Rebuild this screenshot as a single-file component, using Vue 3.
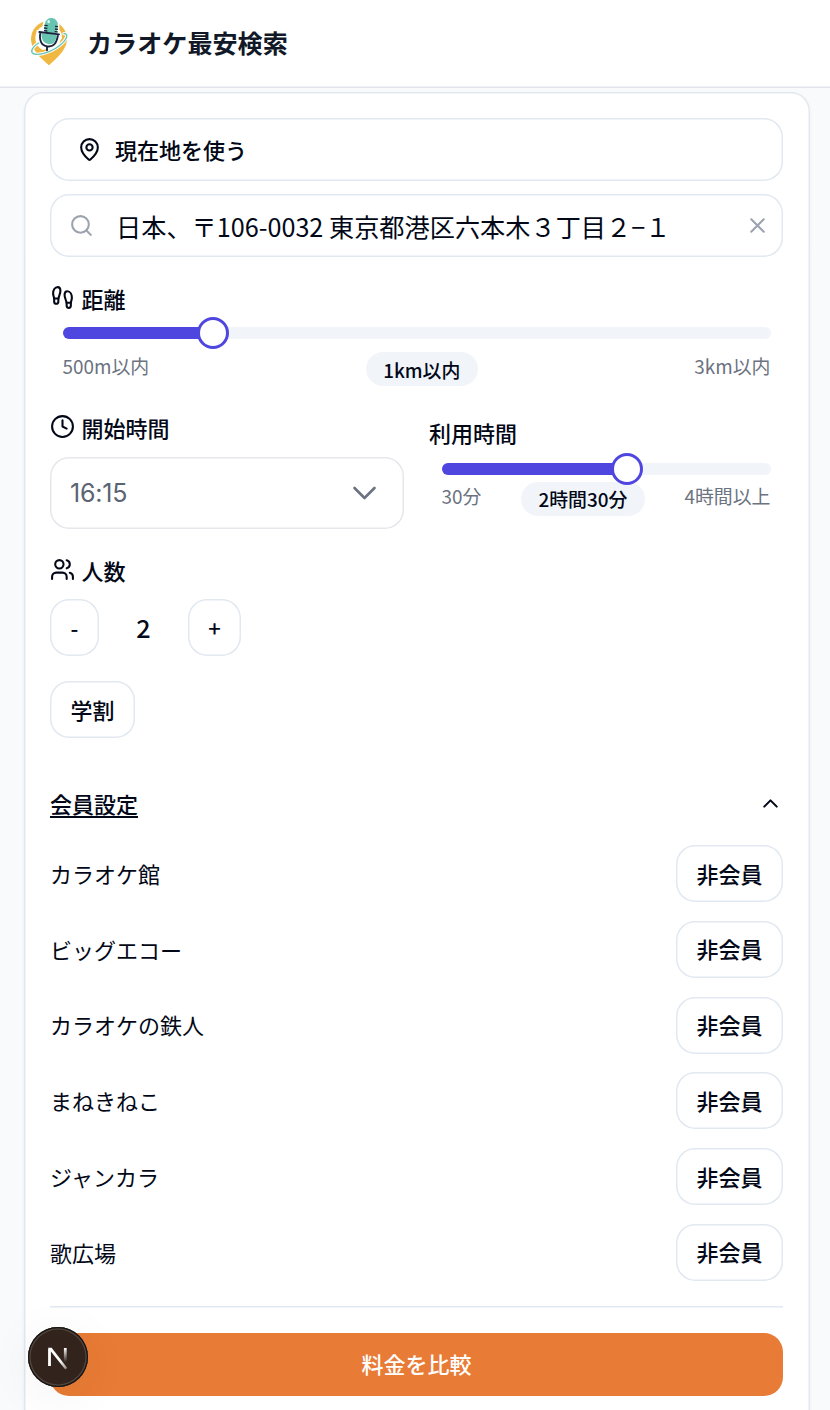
<script setup>
import { ref } from 'vue'

const address = ref('日本、〒106-0032 東京都港区六本木３丁目２−１')
const startTime = ref('16:15')
const people = ref(2)
const memberOpen = ref(true)

// スライダーの位置（%）
const distancePos = ref(21.3)
const durationPos = ref(56.5)

const shops = ref([
  { name: 'カラオケ館', member: false },
  { name: 'ビッグエコー', member: false },
  { name: 'カラオケの鉄人', member: false },
  { name: 'まねきねこ', member: false },
  { name: 'ジャンカラ', member: false },
  { name: '歌広場', member: false }
])

function changePeople(diff) {
  people.value = Math.max(1, people.value + diff)
}
</script>

<template>
  <div class="page">
    <header class="header">
      <svg class="logo" viewBox="84 48 126 153" fill="none">
        <path d="M147 196C136 184 93 154 93 117a54 54 0 0 1 108 0C201 154 158 184 147 196Z" fill="#f0b840" />
        <circle cx="146" cy="114" r="40" fill="#fff" />
        <path d="M128 98V74a25 25 0 0 1 50 0v28Z" fill="#fff" />
        <path d="M108 150Q150 158 190 112L197 125Q191 143 172 166L147 195L114 165Z" fill="#f0b840" />
        <path d="M110 90L184 98Q184 147 147 150Q106 146 110 90Z" fill="#fff" />
        <path d="M192 101C208 101 200 121 177 138C148 160 104 170 96 157C92 150 102 137 116 129" stroke="#fff" stroke-width="10" stroke-linecap="round" />
        <path d="M192 101C208 101 200 121 177 138C148 160 104 170 96 157C92 150 102 137 116 129" stroke="#67c4b1" stroke-width="4" stroke-linecap="round" />
        <rect x="134" y="54" width="39" height="50" rx="19" transform="rotate(6 153 78)" fill="#67c4b1" />
        <path d="M133 76l10 1M132 84l10 1M132 92l10 1M165 79l9 1M165 87l9 1M164 95l9 1" stroke="#18233a" stroke-width="4" />
        <ellipse cx="146" cy="65" rx="4" ry="5" fill="#d8f5ee" />
        <path d="M124 100L170 105Q168 134 146 133Q124 130 124 100Z" fill="#67c4b1" />
        <path d="M118 96L177 103M121 97C117 121 124 137 142 139C162 142 171 127 174 104M141 140v11" stroke="#18233a" stroke-width="5.6" stroke-linecap="round" />
      </svg>
      <h1 class="title">カラオケ最安検索</h1>
    </header>

    <main class="card">
      <!-- 場所 -->
      <button class="box locate">
        <svg class="icon" viewBox="0 0 24 24">
          <path d="M20 10c0 4.993-5.539 10.193-7.399 11.799a1 1 0 0 1-1.202 0C9.539 20.193 4 14.993 4 10a8 8 0 0 1 16 0" />
          <circle cx="12" cy="10" r="3" />
        </svg>
        <span>現在地を使う</span>
      </button>
      <div class="box search">
        <svg class="icon muted" viewBox="0 0 24 24">
          <circle cx="11" cy="11" r="8" />
          <path d="m21 21-4.3-4.3" />
        </svg>
        <span class="address">{{ address }}</span>
        <svg class="icon muted" viewBox="0 0 24 24">
          <path d="M18 6 6 18M6 6l12 12" />
        </svg>
      </div>

      <!-- 距離 -->
      <section class="distance">
        <div class="label">
          <svg class="icon" viewBox="0 0 24 24">
            <path d="M4 16v-2.38C4 11.5 2.97 10.5 3 8c.03-2.72 1.49-6 4.5-6C9.37 2 10 3.8 10 5.5c0 3.11-2 5.66-2 8.68V16a2 2 0 1 1-4 0Z" />
            <path d="M20 20v-2.38c0-2.12 1.03-3.12 1-5.62-.03-2.72-1.49-6-4.5-6C14.63 6 14 7.8 14 9.5c0 3.11 2 5.66 2 8.68V20a2 2 0 1 0 4 0Z" />
            <path d="M16 17h4M4 13h4" />
          </svg>
          <span>距離</span>
        </div>
        <div class="slider">
          <div class="fill" :style="{ width: distancePos + '%' }"></div>
          <div class="knob" :style="{ left: distancePos + '%' }"></div>
        </div>
        <div class="scale">
          <span>500m以内</span>
          <span class="pill">1km以内</span>
          <span>3km以内</span>
        </div>
      </section>

      <!-- 時間 -->
      <div class="times">
        <section class="start">
          <div class="label">
            <svg class="icon" viewBox="0 0 24 24">
              <circle cx="12" cy="12" r="10" />
              <path d="M12 6v6l4 2" />
            </svg>
            <span>開始時間</span>
          </div>
          <div class="select">
            <span>{{ startTime }}</span>
            <svg class="chevron" viewBox="0 0 24 14">
              <path d="M2 2l10 10L22 2" />
            </svg>
          </div>
        </section>
        <section class="duration">
          <div class="label">利用時間</div>
          <div class="slider">
            <div class="fill" :style="{ width: durationPos + '%' }"></div>
            <div class="knob" :style="{ left: durationPos + '%' }"></div>
          </div>
          <div class="scale">
            <span>30分</span>
            <span class="pill">2時間30分</span>
            <span>4時間以上</span>
          </div>
        </section>
      </div>

      <!-- 人数 -->
      <section class="people">
        <div class="label">
          <svg class="icon" viewBox="0 0 24 24">
            <path d="M16 21v-2a4 4 0 0 0-4-4H6a4 4 0 0 0-4 4v2" />
            <circle cx="9" cy="7" r="4" />
            <path d="M22 21v-2a4 4 0 0 0-3-3.87M16 3.13a4 4 0 0 1 0 7.75" />
          </svg>
          <span>人数</span>
        </div>
        <div class="counter">
          <button class="btn" @click="changePeople(-1)">-</button>
          <span class="count">{{ people }}</span>
          <button class="btn" @click="changePeople(1)">+</button>
        </div>
        <button class="btn">学割</button>
      </section>

      <!-- 会員設定 -->
      <button class="member-toggle" @click="memberOpen = !memberOpen">
        <span>会員設定</span>
        <svg class="icon" viewBox="0 0 24 24">
          <path d="m18 15-6-6-6 6" />
        </svg>
      </button>
      <ul v-if="memberOpen" class="shops">
        <li v-for="shop in shops" :key="shop.name" class="shop">
          <span class="shop-name">{{ shop.name }}</span>
          <button class="btn" @click="shop.member = !shop.member">
            {{ shop.member ? '会員' : '非会員' }}
          </button>
        </li>
      </ul>

      <div class="footer">
        <button class="submit">料金を比較</button>
      </div>
    </main>

    <!-- 左下のバッジ -->
    <div class="badge">
      <svg viewBox="0 0 60 60" fill="none">
        <defs>
          <linearGradient id="fadeA" x1="33" y1="33" x2="42" y2="43" gradientUnits="userSpaceOnUse">
            <stop stop-color="#fff" />
            <stop offset="0.6" stop-color="#fff" stop-opacity="0.6" />
            <stop offset="1" stop-color="#fff" stop-opacity="0" />
          </linearGradient>
          <linearGradient id="fadeB" x1="0" y1="21" x2="0" y2="35" gradientUnits="userSpaceOnUse">
            <stop stop-color="#fff" />
            <stop offset="1" stop-color="#fff" stop-opacity="0" />
          </linearGradient>
        </defs>
        <path d="M21.5 39V21.5" stroke="#fff" stroke-width="2.8" />
        <path d="M20.1 20.7h3.5L39.3 41l-2 1.4L20.1 21Z" fill="url(#fadeA)" />
        <path d="M37.3 21v14" stroke="url(#fadeB)" stroke-width="2.8" />
      </svg>
    </div>
  </div>
</template>

<style>
body {
  margin: 0;
  background: #f8fafc;
}
</style>

<style scoped>
.page {
  position: relative;
  height: 1410px;
  overflow: hidden;
  background: #f8fafc;
  color: #020817;
  font-family: "Noto Sans CJK JP", "Noto Sans", sans-serif;
  font-size: 22px;
}

button {
  margin: 0;
  padding: 0;
  border: 0;
  background: #fff;
  color: inherit;
  font: inherit;
  font-weight: 500;
  cursor: pointer;
}

.header {
  display: flex;
  align-items: center;
  box-sizing: border-box;
  height: 88px;
  padding: 0 28px 5px;
  background: #fff;
  box-shadow: inset 0 -1.5px #e2e5ec;
}

.logo {
  width: 42px;
  height: 51px;
}

.title {
  margin: 1px 0 0 17px;
  font-size: 25.1px;
  line-height: 38px;
  font-weight: 700;
  color: #111827;
}

.card {
  box-sizing: border-box;
  width: 786px;
  height: 1340px;
  margin: 3.5px 0 0 23.5px;
  padding: 26.5px 26.5px 0;
  background: #fff;
  border-radius: 19px;
  box-shadow: inset 0 0 0 1.5px #e2e8f0, 0 1.5px 3px rgba(0, 0, 0, 0.06);
}

.icon {
  flex: none;
  width: 25px;
  height: 25px;
  fill: none;
  stroke: currentColor;
  stroke-width: 2;
  stroke-linecap: round;
  stroke-linejoin: round;
}

.muted {
  color: #9ca3af;
}

.box {
  display: flex;
  align-items: center;
  box-sizing: border-box;
  width: 100%;
  height: 63px;
  border-radius: 19px;
  box-shadow: inset 0 0 0 1.5px #e2e8f0;
}

.locate {
  gap: 13px;
  padding: 0 27px 1px;
}

.search {
  margin-top: 12.5px;
  padding: 0 13px 0 19px;
}

.address {
  flex: 1;
  margin: 1px 0 0 22px;
  font-size: 25.2px;
  line-height: 38px;
}

.label {
  display: flex;
  align-items: center;
  gap: 6.5px;
  height: 32px;
  line-height: 32px;
  font-weight: 500;
}

.distance {
  height: 101px;
  margin-top: 25px;
}

.slider {
  position: relative;
  height: 12px;
  margin: 13.5px 12.5px 0;
  border-radius: 6px;
  background: #f1f5f9;
}

.fill {
  height: 12px;
  border-radius: 6px 0 0 6px;
  background: #4f46e0;
}

.knob {
  position: absolute;
  top: 50%;
  box-sizing: border-box;
  width: 32px;
  height: 32px;
  border: 3px solid #4f46e0;
  border-radius: 50%;
  background: #fff;
  transform: translate(-50%, -50%);
}

.scale {
  display: flex;
  justify-content: space-between;
  align-items: flex-start;
  margin: 13px 12.5px 0;
  font-size: 18.9px;
  line-height: 27px;
  color: #6b7280;
}

.pill {
  padding: 3.5px 17.5px;
  border-radius: 17px;
  background: #f1f5f9;
  color: #020817;
  font-weight: 500;
}

.times {
  display: grid;
  grid-template-columns: 353.5px 354px;
  justify-content: space-between;
  height: 117px;
  margin-top: 28px;
}

.select {
  display: flex;
  align-items: center;
  justify-content: space-between;
  box-sizing: border-box;
  height: 72px;
  margin-top: 14.5px;
  padding: 0 27px 0 20px;
  border-radius: 19px;
  background: #fff;
  box-shadow: inset 0 0 0 1.5px #e5e7eb;
  color: #5b6472;
  font-family: Inter, sans-serif;
  font-size: 25px;
  letter-spacing: -0.2px;
}

.select span {
  margin-top: -1px;
}

.chevron {
  width: 25px;
  height: 14px;
  fill: none;
  stroke: #6b7280;
  stroke-width: 2.6;
  stroke-linecap: round;
  stroke-linejoin: round;
}

.duration .label {
  margin-top: 5px;
}

.duration .slider {
  margin-top: 15.5px;
}

.duration .scale {
  margin-top: 6.5px;
}

.people {
  margin-top: 26px;
}

.btn {
  box-sizing: border-box;
  height: 57px;
  padding: 0 20.5px 2px;
  border-radius: 19px;
  box-shadow: inset 0 0 0 1.5px #e2e8f0;
}

.counter {
  display: flex;
  align-items: center;
  margin: 13.5px 0 25px;
}

.count {
  width: 89px;
  padding-bottom: 2px;
  text-align: center;
  font-size: 25.2px;
  font-weight: 500;
}

.member-toggle {
  display: flex;
  align-items: center;
  justify-content: space-between;
  width: 100%;
  height: 32px;
  margin-top: 49px;
  text-decoration: underline;
  text-underline-offset: 3px;
}

.shops {
  display: flex;
  flex-direction: column;
  gap: 18.8px;
  margin: 26px 0 0;
  padding: 0;
  list-style: none;
}

.shop {
  display: flex;
  align-items: center;
  justify-content: space-between;
  height: 57px;
}

.shop-name {
  padding-bottom: 1.5px;
}

.footer {
  margin-top: 25.5px;
  padding-top: 26.5px;
  box-shadow: inset 0 1.5px #e2e8f0;
}

.submit {
  width: 100%;
  height: 63px;
  padding-bottom: 2px;
  border-radius: 19px;
  background: #e87b35;
  color: #fff;
}

.badge {
  position: absolute;
  left: 28px;
  top: 1327px;
  width: 60px;
  height: 60px;
  border-radius: 50%;
  background: #32241c;
  box-shadow: inset 0 0 0 1.2px #171513, inset 0 0 0 2.6px #50443d, 0 8px 50px rgba(0, 0, 0, 0.06);
}

.badge svg {
  display: block;
  width: 60px;
  height: 60px;
}
</style>
